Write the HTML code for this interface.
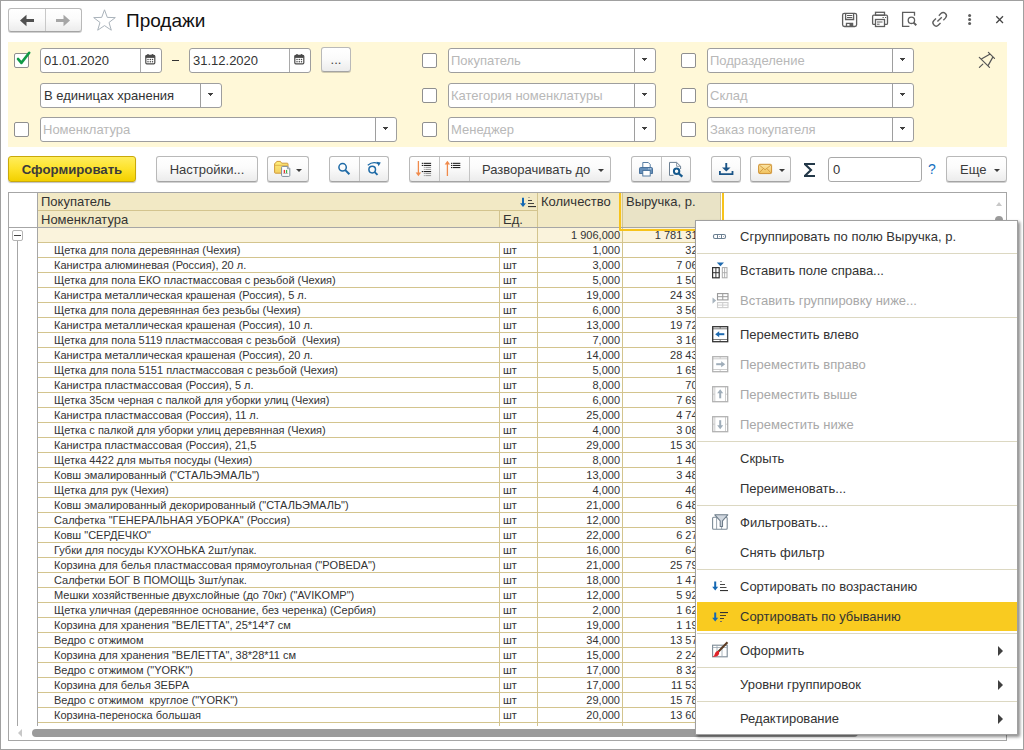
<!DOCTYPE html>
<html><head><meta charset="utf-8"><title>Продажи</title>
<style>
*{box-sizing:border-box;margin:0;padding:0}
html,body{width:1024px;height:750px;overflow:hidden;background:#fff;font-family:"Liberation Sans",sans-serif;color:#333;position:relative}
.a{position:absolute}
.t{position:absolute;white-space:nowrap}
.btn{position:absolute;border:1px solid #b9b9b9;border-bottom-color:#a4a4a4;border-radius:3px;background:linear-gradient(#ffffff 0%,#fbfbfb 45%,#ececec 100%);box-shadow:0 1px 0 rgba(0,0,0,.18)}
.fld{position:absolute;background:#fff;border:1px solid #9e9e9e;border-radius:3px;height:25px}
.dd{position:absolute;top:0;right:0;width:21px;height:23px;border-left:1px solid #9e9e9e}
.dd:after{content:"";position:absolute;left:7px;top:9px;width:5px;height:3px;background:linear-gradient(#404040,#404040) 0 0/5px 1px no-repeat,linear-gradient(#404040,#404040) 1px 1px/3px 1px no-repeat,linear-gradient(#404040,#404040) 2px 2px/1px 1px no-repeat}
.cb{position:absolute;width:15px;height:15px;border:1px solid #8f8f8f;border-radius:2px;background:#fff}
.ph{position:absolute;left:2px;top:0;line-height:23px;font-size:13px;color:#b8b8b8;white-space:nowrap}
.val{position:absolute;left:3px;top:0;line-height:23px;font-size:13px;color:#333;white-space:nowrap}
.arr{position:absolute;border-left:3px solid transparent;border-right:3px solid transparent;border-top:3.5px solid #404040}
.hd{position:absolute;background:#f2eacb}
.cell{position:absolute;font-size:11px;line-height:15px;white-space:pre;color:#333}
.mi{position:absolute;left:0;width:321px;height:30px}
.mt{position:absolute;left:44px;top:0;line-height:30px;font-size:13px;color:#333;white-space:nowrap}
.mt.dis{color:#a8a8a8}
.sep{position:absolute;left:1px;width:320px;height:1px;background:#dcd8c2}
.sub{position:absolute;right:14px;top:10px;border-top:5px solid transparent;border-bottom:5px solid transparent;border-left:5px solid #404040}
</style></head><body>

<div class="a" style="left:0;top:0;width:1024px;height:750px;border:1px solid #a0a0a0"></div>
<div class="btn" style="left:8px;top:8px;width:74px;height:24px"></div>
<div class="a" style="left:45px;top:9px;width:1px;height:22px;background:#c8c8c8"></div>
<svg class="a" style="left:0;top:0" width="1024" height="40">
<path d="M20 20.5 L26.5 14.8 L26.5 26.2 Z" fill="#505050"/><rect x="26" y="19" width="8" height="3" fill="#505050"/>
<path d="M70 20.5 L63.5 14.8 L63.5 26.2 Z" fill="#a6a6a6"/><rect x="56" y="19" width="8" height="3" fill="#a6a6a6"/>
<path d="M104.5 9.8 L107.3 17.4 L115.3 17.6 L109 22.5 L111.3 30.2 L104.5 25.6 L97.7 30.2 L100 22.5 L93.7 17.6 L101.7 17.4 Z" fill="none" stroke="#aab3bb" stroke-width="1"/>
<g fill="none" stroke="#5e5e5e" stroke-width="1.3">
<rect x="842.6" y="13.3" width="14" height="13.2" rx="1.8"/>
<path d="M845.6 13.3 V19.5 H853.6 V13.3"/><path d="M847 15.5 H852.3 M847 17.5 H852.3" stroke-width="1"/>
<path d="M846.5 26.5 V23.4 H852.6 V26.5"/>
</g>
<rect x="849.5" y="23.8" width="3" height="2.7" fill="#5e5e5e"/>
<g fill="none" stroke="#5e5e5e" stroke-width="1.3">
<rect x="875.5" y="12.3" width="9" height="3"/>
<path d="M875.2 24.4 H873.8 Q872.6 24.4 872.6 23.2 V16.4 Q872.6 15.2 873.8 15.2 H886.3 Q887.5 15.2 887.5 16.4 V23.2 Q887.5 24.4 886.3 24.4 H884.8"/>
<rect x="875.5" y="19.5" width="9" height="7"/>
<path d="M877 22 H882.5 M877 24.2 H879.6" stroke-width="1"/>
<path d="M882.5 17.5 H883.8 M885 17.5 H886.2" stroke-width="1"/>
</g>
<g fill="none" stroke="#5e5e5e" stroke-width="1.3">
<path d="M909.4 26.3 H902.6 V12.4 H914.5 V15.8"/>
<circle cx="911.4" cy="20.3" r="3.2"/>
<path d="M913.6 22.6 L916.3 25.2" stroke-width="2"/>
</g>
<g fill="none" stroke="#5e5e5e" stroke-width="1.35" transform="translate(939.6,19.4) rotate(-45)">
<path d="M-1.9 -3.2 H-4.8 A3.2 3.2 0 0 0 -4.8 3.2 H-1.9"/>
<path d="M2.1 -3.2 H5 A3.2 3.2 0 0 1 5 3.2 H2.1"/>
<path d="M-3.1 0 H3.1"/>
</g>
<g fill="#5e5e5e"><circle cx="969.6" cy="15.6" r="1.5"/><circle cx="969.6" cy="19.6" r="1.5"/><circle cx="969.6" cy="23.6" r="1.5"/></g>
<path d="M996.3 16.3 L1003 23 M1003 16.3 L996.3 23" stroke="#454545" stroke-width="1.3"/>
</svg>
<div class="t" style="left:126px;top:9px;font-size:19px;line-height:24px;color:#111">Продажи</div>
<div class="a" style="left:8px;top:42px;width:999px;height:105px;background:#fff8d8"></div>
<div class="cb" style="left:14px;top:53px"></div>
<svg class="a" style="left:10px;top:49px" width="22" height="22"><path d="M8 9.9 L11.4 13.9 L19.2 3.8" fill="none" stroke="#109a46" stroke-width="2.6" stroke-linecap="round" stroke-linejoin="round"/></svg>
<div class="fld" style="left:40px;top:48px;width:122px">
<div class="val">01.01.2020</div>
<div class="a" style="top:0;right:0;width:21px;height:23px;border-left:1px solid #a9a9a9"></div>
<svg class="a" style="right:5px;top:5px" width="11" height="11"><rect x="0.8" y="1.3" width="9" height="8.5" rx="1" fill="#fff" stroke="#4a4a4a" stroke-width="1.2"/><rect x="0.8" y="1.3" width="9" height="2.6" fill="#4a4a4a"/><circle cx="3" cy="1" r="0.9" fill="#4a4a4a"/><circle cx="7.5" cy="1" r="0.9" fill="#4a4a4a"/><g fill="#4a4a4a"><circle cx="3" cy="5.6" r=".75"/><circle cx="5.3" cy="5.6" r=".75"/><circle cx="7.5" cy="5.6" r=".75"/><circle cx="3" cy="7.7" r=".75"/><circle cx="5.3" cy="7.7" r=".75"/><circle cx="7.5" cy="7.7" r=".75"/></g></svg>
</div>
<div class="a" style="left:172px;top:60px;width:7px;height:1px;background:#333"></div>
<div class="fld" style="left:189px;top:48px;width:122px">
<div class="val">31.12.2020</div>
<div class="a" style="top:0;right:0;width:21px;height:23px;border-left:1px solid #a9a9a9"></div>
<svg class="a" style="right:5px;top:5px" width="11" height="11"><rect x="0.8" y="1.3" width="9" height="8.5" rx="1" fill="#fff" stroke="#4a4a4a" stroke-width="1.2"/><rect x="0.8" y="1.3" width="9" height="2.6" fill="#4a4a4a"/><circle cx="3" cy="1" r="0.9" fill="#4a4a4a"/><circle cx="7.5" cy="1" r="0.9" fill="#4a4a4a"/><g fill="#4a4a4a"><circle cx="3" cy="5.6" r=".75"/><circle cx="5.3" cy="5.6" r=".75"/><circle cx="7.5" cy="5.6" r=".75"/><circle cx="3" cy="7.7" r=".75"/><circle cx="5.3" cy="7.7" r=".75"/><circle cx="7.5" cy="7.7" r=".75"/></g></svg>
</div>
<div class="btn" style="left:321px;top:47px;width:30px;height:25px"><div class="t" style="left:0;width:28px;text-align:center;top:0;line-height:24px;font-size:13px;color:#444">...</div></div>
<div class="fld" style="left:40px;top:83px;width:182px">
<div class="val">В единицах хранения</div>
<div class="dd"></div>
</div>
<div class="cb" style="left:14px;top:122px"></div>
<div class="fld" style="left:40px;top:117px;width:357px">
<div class="ph">Номенклатура</div>
<div class="dd"></div>
</div>
<div class="cb" style="left:422px;top:53px"></div>
<div class="fld" style="left:448px;top:48px;width:208px">
<div class="ph">Покупатель</div>
<div class="dd"></div>
</div>
<div class="cb" style="left:422px;top:88px"></div>
<div class="fld" style="left:448px;top:83px;width:208px">
<div class="ph">Категория номенклатуры</div>
<div class="dd"></div>
</div>
<div class="cb" style="left:422px;top:122px"></div>
<div class="fld" style="left:448px;top:117px;width:208px">
<div class="ph">Менеджер</div>
<div class="dd"></div>
</div>
<div class="cb" style="left:681px;top:53px"></div>
<div class="fld" style="left:707px;top:48px;width:207px">
<div class="ph">Подразделение</div>
<div class="dd"></div>
</div>
<div class="cb" style="left:681px;top:88px"></div>
<div class="fld" style="left:707px;top:83px;width:207px">
<div class="ph">Склад</div>
<div class="dd"></div>
</div>
<div class="cb" style="left:681px;top:122px"></div>
<div class="fld" style="left:707px;top:117px;width:207px">
<div class="ph">Заказ покупателя</div>
<div class="dd"></div>
</div>
<svg class="a" style="left:970px;top:44px" width="30" height="30"><g fill="none" stroke="#555" stroke-width="1.2" stroke-linecap="round" transform="translate(-970,-44)"><path d="M979.3 57.4 L989.5 67.4 M988.4 52.3 L994.5 58.4 M981.8 58.8 L989.3 54.4 M992.7 57.4 L988.2 65.4 M979.4 67.4 L982.8 64.1"/></g></svg>
<div class="a" style="left:8px;top:156px;width:128px;height:26px;border:1px solid #c9a90a;border-radius:3px;background:linear-gradient(#ffed5c 0%,#fde22a 50%,#f2d000 100%);box-shadow:0 1px 1px rgba(0,0,0,.25)"></div>
<div class="t" style="left:8px;top:156px;width:128px;text-align:center;line-height:27px;font-size:13.2px;font-weight:bold;color:#3b3b3b">Сформировать</div>
<div class="btn" style="left:156px;top:156px;width:102px;height:26px"></div>
<div class="t" style="left:156px;top:156px;width:102px;text-align:center;line-height:27px;font-size:13px;color:#3b3b3b">Настройки...</div>
<div class="btn" style="left:267px;top:156px;width:42px;height:26px"></div>
<svg class="a" style="left:296px;top:169px" width="6" height="3"><path d="M0 0H6L3 3Z" fill="#3c3c3c"/></svg>
<div class="btn" style="left:329px;top:156px;width:60px;height:26px"></div>
<div class="a" style="left:359px;top:157px;width:1px;height:24px;background:#c4c4c4"></div>
<div class="btn" style="left:409px;top:156px;width:202px;height:26px"></div>
<div class="a" style="left:439px;top:157px;width:1px;height:24px;background:#c4c4c4"></div>
<div class="a" style="left:469px;top:157px;width:1px;height:24px;background:#c4c4c4"></div>
<div class="t" style="left:482px;top:156px;line-height:27px;font-size:13px;color:#3b3b3b">Разворачивать до</div>
<svg class="a" style="left:598px;top:169px" width="6" height="3"><path d="M0 0H6L3 3Z" fill="#3c3c3c"/></svg>
<div class="btn" style="left:631px;top:156px;width:60px;height:26px"></div>
<div class="a" style="left:661px;top:157px;width:1px;height:24px;background:#c4c4c4"></div>
<div class="btn" style="left:711px;top:156px;width:30px;height:26px"></div>
<div class="btn" style="left:750px;top:156px;width:41px;height:26px"></div>
<svg class="a" style="left:779px;top:169px" width="6" height="3"><path d="M0 0H6L3 3Z" fill="#3c3c3c"/></svg>
<div class="fld" style="left:828px;top:157px;width:94px;height:25px;border-color:#a9a9a9"><div class="val" style="left:4px">0</div></div>
<div class="t" style="left:928px;top:156px;line-height:27px;font-size:14px;color:#1670c0">?</div>
<div class="btn" style="left:946px;top:156px;width:61px;height:26px"></div>
<div class="t" style="left:960px;top:156px;line-height:27px;font-size:13px;color:#3b3b3b">Еще</div>
<svg class="a" style="left:994px;top:169px" width="6" height="3"><path d="M0 0H6L3 3Z" fill="#3c3c3c"/></svg>
<svg class="a" style="left:0;top:150px" width="1024" height="40"><g transform="translate(0,-150)">
<defs><linearGradient id="fg" x1="0" y1="0" x2="0" y2="1"><stop offset="0" stop-color="#fff07a"/><stop offset="1" stop-color="#f3cf62"/></linearGradient><linearGradient id="eg" x1="0" y1="0" x2="0" y2="1"><stop offset="0" stop-color="#fbe6a8"/><stop offset="1" stop-color="#f0c05a"/></linearGradient></defs>
<path d="M274.6 164 Q274.6 163.2 275.4 163.2 L276.8 161.4 H280.4 L281.6 163.2 H287.2 Q288 163.2 288 164 V172.4 Q288 173.2 287.2 173.2 H275.4 Q274.6 173.2 274.6 172.4 Z" fill="url(#fg)" stroke="#d09a3a" stroke-width="1"/>
<path d="M275 165.3 H287.6" stroke="#d9a745" stroke-width="0.8"/>
<path d="M282.6 166.4 H287.6 L289.8 168.6 V175.4 Q289.8 176.4 288.8 176.4 H282.6 Q281.6 176.4 281.6 175.4 V167.4 Q281.6 166.4 282.6 166.4 Z" fill="#fff" stroke="#7b8b99" stroke-width="1"/>
<path d="M287.4 166.6 V168.8 H289.6" fill="#c8d0d8" stroke="#7b8b99" stroke-width="0.7"/>
<rect x="283.7" y="169.9" width="1.3" height="3.3" fill="#e53535"/><rect x="285.9" y="169.9" width="1.3" height="3.3" fill="#3cb44b"/><path d="M283.2 173.6 H288.2" stroke="#8a8f99" stroke-width="0.6"/>
<g fill="none" stroke="#1e6aa6" stroke-width="1.5"><circle cx="342.6" cy="167.3" r="3.7"/><path d="M345.3 170.1 L349.4 174.3" stroke-width="2"/></g>
<g fill="none" stroke="#1e6aa6" stroke-width="1.5"><circle cx="372.2" cy="169.6" r="3.3"/><path d="M374.7 172.1 L377.5 174.9" stroke-width="1.9"/><path d="M367.8 165.2 Q373 160.8 378.6 163.8" stroke-width="1.3"/></g>
<path d="M376.6 161.8 L380.8 162.6 L378.6 166.3 Z" fill="#1e6aa6"/>
<g stroke="#f08a4b" fill="#f08a4b"><path d="M418.4 161 V174" stroke-width="1.3"/><path d="M415.7 172.5 H421.1 L418.4 176.2 Z" stroke="none"/></g>
<g fill="#222"><rect x="421.8" y="162.8" width="1.2" height="1.1"/><rect x="423.6" y="162.8" width="7.5" height="1.1"/><rect x="421.8" y="164.9" width="1.2" height="1.1"/><rect x="423.6" y="164.9" width="7.5" height="1.1"/><rect x="421.8" y="171" width="1.2" height="1.1"/><rect x="423.6" y="171" width="7.5" height="1.1"/></g>
<g fill="#999"><rect x="423.8" y="166.9" width="1" height="1"/><rect x="425.4" y="166.9" width="5.7" height="1"/><rect x="423.8" y="168.9" width="1" height="1"/><rect x="425.4" y="168.9" width="5.7" height="1"/><rect x="423.8" y="173" width="1" height="1"/><rect x="425.4" y="173" width="5.7" height="1"/><rect x="423.8" y="175.1" width="1" height="1"/><rect x="425.4" y="175.1" width="5.7" height="1"/></g>
<g stroke="#f08a4b" fill="#f08a4b"><path d="M447.4 176 V163" stroke-width="1.3"/><path d="M444.7 164.5 H450.1 L447.4 160.8 Z" stroke="none"/></g>
<g fill="#222"><rect x="451" y="162.8" width="1.2" height="1.1"/><rect x="452.8" y="162.8" width="7.5" height="1.1"/><rect x="451" y="164.9" width="1.2" height="1.1"/><rect x="452.8" y="164.9" width="7.5" height="1.1"/><rect x="451" y="167" width="1.2" height="1.1"/><rect x="452.8" y="167" width="7.5" height="1.1"/></g>
<path d="M642.8 167.5 V162.5 H648.3 L650.2 164.4 V167.5" fill="#fff" stroke="#46709a" stroke-width="0.9"/>
<path d="M640.6 167.5 H651.4 Q652.5 167.5 652.5 168.6 V173.5 H639.5 V168.6 Q639.5 167.5 640.6 167.5 Z" fill="#6790ba" stroke="#3f6a95" stroke-width="0.9"/>
<rect x="642.8" y="170.5" width="7.4" height="5.5" fill="#fff" stroke="#46709a" stroke-width="0.9"/>
<rect x="648.4" y="168.4" width="1" height="0.9" fill="#fff"/><rect x="650.2" y="168.4" width="1" height="0.9" fill="#fff"/>
<path d="M669.5 175.4 V162.4 H676.6 L680.6 166.3 V169" fill="#fff" stroke="#6c7f92" stroke-width="1"/>
<path d="M676.6 162.4 V166.3 H680.6" fill="none" stroke="#6c7f92" stroke-width="0.8"/>
<path d="M669.5 175.4 H673.5" stroke="#6c7f92" stroke-width="1"/>
<g fill="none" stroke="#175a8e" stroke-width="2"><circle cx="676.6" cy="171.3" r="2.7"/><path d="M678.8 173.5 L682.3 176.6" stroke-width="2.3"/></g>
<g fill="#1a5487"><rect x="725.3" y="163" width="1.9" height="5.5"/><path d="M722 167.6 H730.5 L726.25 171.6 Z"/><path d="M719 171 H720.8 V173.3 H731.6 V171 H733.4 V175 H719 Z"/></g>
<path d="M758.6 165.5 Q758.6 164.3 759.8 164.3 H770.4 Q771.6 164.3 771.6 165.5 V172.4 Q771.6 173.6 770.4 173.6 H759.8 Q758.6 173.6 758.6 172.4 Z" fill="url(#eg)" stroke="#cf9234" stroke-width="1"/>
<path d="M759.2 165 L765.1 169.8 L771 165 M759.2 173 L763.3 168.6 M771 173 L766.9 168.6" fill="none" stroke="#d39a40" stroke-width="0.9"/>
<rect x="804" y="163" width="11" height="2" fill="#233848"/><rect x="804" y="175" width="11" height="2" fill="#233848"/><path d="M805 164.3 L811 170 L805 175.7" fill="none" stroke="#233848" stroke-width="2.1"/>
</g></svg>
<div class="a" style="left:8px;top:192px;width:999px;height:549px;border:1px solid #a6a6a6;background:#fff;overflow:hidden"><div class="a" style="left:0;top:0;width:997px;height:533px;overflow:hidden">
<div class="a" style="left:29px;top:0px;width:584px;height:34px;background:#f2e9c5"></div>
<div class="a" style="left:613px;top:0px;width:99px;height:34px;background:#e9e3c6"></div>
<div class="a" style="left:29px;top:35px;width:685px;height:14px;background:#faf3dc"></div>
<div class="a" style="left:28px;top:0px;width:1px;height:533px;background:#a6a6a6"></div>
<div class="a" style="left:29px;top:17px;width:499px;height:1px;background:#d3c48e"></div>
<div class="a" style="left:490px;top:18px;width:1px;height:16px;background:#d3c48e"></div>
<div class="a" style="left:528px;top:0px;width:1px;height:533px;background:#d3c48e"></div>
<div class="a" style="left:613px;top:0px;width:1px;height:533px;background:#d3c48e"></div>
<div class="a" style="left:711px;top:0px;width:1px;height:34px;background:#d3c48e"></div>
<div class="a" style="left:712px;top:0px;width:3px;height:35px;background:#fff"></div>
<div class="a" style="left:0px;top:34px;width:714px;height:1px;background:#a6a6a6"></div>
<div class="a" style="left:490px;top:50px;width:1px;height:483px;background:#d3c48e"></div>
<div class="a" style="left:714px;top:35px;width:1px;height:498px;background:#d3c48e"></div>
<div class="a" style="left:29px;top:49px;width:686px;height:1px;background:#d3c48e"></div>
<div class="a" style="left:29px;top:64px;width:686px;height:1px;background:#d3c48e"></div>
<div class="a" style="left:29px;top:79px;width:686px;height:1px;background:#d3c48e"></div>
<div class="a" style="left:29px;top:94px;width:686px;height:1px;background:#d3c48e"></div>
<div class="a" style="left:29px;top:109px;width:686px;height:1px;background:#d3c48e"></div>
<div class="a" style="left:29px;top:124px;width:686px;height:1px;background:#d3c48e"></div>
<div class="a" style="left:29px;top:139px;width:686px;height:1px;background:#d3c48e"></div>
<div class="a" style="left:29px;top:154px;width:686px;height:1px;background:#d3c48e"></div>
<div class="a" style="left:29px;top:169px;width:686px;height:1px;background:#d3c48e"></div>
<div class="a" style="left:29px;top:184px;width:686px;height:1px;background:#d3c48e"></div>
<div class="a" style="left:29px;top:199px;width:686px;height:1px;background:#d3c48e"></div>
<div class="a" style="left:29px;top:214px;width:686px;height:1px;background:#d3c48e"></div>
<div class="a" style="left:29px;top:229px;width:686px;height:1px;background:#d3c48e"></div>
<div class="a" style="left:29px;top:244px;width:686px;height:1px;background:#d3c48e"></div>
<div class="a" style="left:29px;top:259px;width:686px;height:1px;background:#d3c48e"></div>
<div class="a" style="left:29px;top:274px;width:686px;height:1px;background:#d3c48e"></div>
<div class="a" style="left:29px;top:289px;width:686px;height:1px;background:#d3c48e"></div>
<div class="a" style="left:29px;top:304px;width:686px;height:1px;background:#d3c48e"></div>
<div class="a" style="left:29px;top:319px;width:686px;height:1px;background:#d3c48e"></div>
<div class="a" style="left:29px;top:334px;width:686px;height:1px;background:#d3c48e"></div>
<div class="a" style="left:29px;top:349px;width:686px;height:1px;background:#d3c48e"></div>
<div class="a" style="left:29px;top:364px;width:686px;height:1px;background:#d3c48e"></div>
<div class="a" style="left:29px;top:379px;width:686px;height:1px;background:#d3c48e"></div>
<div class="a" style="left:29px;top:394px;width:686px;height:1px;background:#d3c48e"></div>
<div class="a" style="left:29px;top:409px;width:686px;height:1px;background:#d3c48e"></div>
<div class="a" style="left:29px;top:424px;width:686px;height:1px;background:#d3c48e"></div>
<div class="a" style="left:29px;top:439px;width:686px;height:1px;background:#d3c48e"></div>
<div class="a" style="left:29px;top:454px;width:686px;height:1px;background:#d3c48e"></div>
<div class="a" style="left:29px;top:469px;width:686px;height:1px;background:#d3c48e"></div>
<div class="a" style="left:29px;top:484px;width:686px;height:1px;background:#d3c48e"></div>
<div class="a" style="left:29px;top:499px;width:686px;height:1px;background:#d3c48e"></div>
<div class="a" style="left:29px;top:514px;width:686px;height:1px;background:#d3c48e"></div>
<div class="a" style="left:29px;top:529px;width:686px;height:1px;background:#d3c48e"></div>
<div class="a" style="left:29px;top:544px;width:686px;height:1px;background:#d3c48e"></div>
<div class="t" style="left:32px;top:1px;font-size:13px;line-height:15px;color:#333;">Покупатель</div>
<div class="t" style="left:32px;top:19px;font-size:13px;line-height:15px;color:#333;">Номенклатура</div>
<div class="t" style="left:494px;top:19px;font-size:13px;line-height:15px;color:#333;">Ед.</div>
<div class="t" style="left:532px;top:1px;font-size:13px;line-height:15px;color:#333;">Количество</div>
<div class="t" style="left:617px;top:1px;font-size:13px;line-height:15px;color:#333;">Выручка, р.</div>
<svg class="a" style="left:508px;top:2px" width="30" height="16"><g transform="translate(-517,-195)"><path d="M523 197.8 V204" stroke="#1568b3" stroke-width="2"/><path d="M520 203.3 H526 L523 206.9 Z" fill="#1568b3"/><g fill="#333"><rect x="528" y="197" width="2" height="0.8" fill="#999"/><rect x="528" y="200" width="4" height="0.9"/><rect x="528" y="203" width="6" height="0.9"/><rect x="528" y="206" width="8" height="1.1"/></g></g></svg>
<div class="cell" style="left:411px;top:35px;width:200px;text-align:right;color:#333">1 906,000</div>
<div class="cell" style="left:510px;top:35px;width:200px;text-align:right;color:#333">1 781 315,00</div>
<div class="a" style="left:3px;top:37px;width:11px;height:11px;border:1px solid #b5b5b5;border-radius:2px;background:#fff"></div>
<div class="a" style="left:5px;top:42px;width:7px;height:1px;background:#444"></div>
<div class="a" style="left:8px;top:48px;width:1px;height:485px;background:#a6a6a6"></div>
<div class="cell" style="left:45px;top:50px;color:#333">Щетка для пола деревянная (Чехия)</div>
<div class="cell" style="left:494px;top:50px;color:#333">шт</div>
<div class="cell" style="left:411px;top:50px;width:200px;text-align:right;color:#333">1,000</div>
<div class="cell" style="left:510px;top:50px;width:200px;text-align:right;color:#333">325,00</div>
<div class="cell" style="left:45px;top:65px;color:#333">Канистра алюминевая (Россия), 20 л.</div>
<div class="cell" style="left:494px;top:65px;color:#333">шт</div>
<div class="cell" style="left:411px;top:65px;width:200px;text-align:right;color:#333">3,000</div>
<div class="cell" style="left:510px;top:65px;width:200px;text-align:right;color:#333">7 065,00</div>
<div class="cell" style="left:45px;top:80px;color:#333">Щетка для пола ЕКО пластмассовая с резьбой (Чехия)</div>
<div class="cell" style="left:494px;top:80px;color:#333">шт</div>
<div class="cell" style="left:411px;top:80px;width:200px;text-align:right;color:#333">5,000</div>
<div class="cell" style="left:510px;top:80px;width:200px;text-align:right;color:#333">1 505,00</div>
<div class="cell" style="left:45px;top:95px;color:#333">Канистра металлическая крашеная (Россия), 5 л.</div>
<div class="cell" style="left:494px;top:95px;color:#333">шт</div>
<div class="cell" style="left:411px;top:95px;width:200px;text-align:right;color:#333">19,000</div>
<div class="cell" style="left:510px;top:95px;width:200px;text-align:right;color:#333">24 395,00</div>
<div class="cell" style="left:45px;top:110px;color:#333">Щетка для пола деревянная без резьбы (Чехия)</div>
<div class="cell" style="left:494px;top:110px;color:#333">шт</div>
<div class="cell" style="left:411px;top:110px;width:200px;text-align:right;color:#333">6,000</div>
<div class="cell" style="left:510px;top:110px;width:200px;text-align:right;color:#333">3 565,00</div>
<div class="cell" style="left:45px;top:125px;color:#333">Канистра металлическая крашеная (Россия), 10 л.</div>
<div class="cell" style="left:494px;top:125px;color:#333">шт</div>
<div class="cell" style="left:411px;top:125px;width:200px;text-align:right;color:#333">13,000</div>
<div class="cell" style="left:510px;top:125px;width:200px;text-align:right;color:#333">19 725,00</div>
<div class="cell" style="left:45px;top:140px;color:#333">Щетка для пола 5119 пластмассовая с резьбой  (Чехия)</div>
<div class="cell" style="left:494px;top:140px;color:#333">шт</div>
<div class="cell" style="left:411px;top:140px;width:200px;text-align:right;color:#333">7,000</div>
<div class="cell" style="left:510px;top:140px;width:200px;text-align:right;color:#333">3 165,00</div>
<div class="cell" style="left:45px;top:155px;color:#333">Канистра металлическая крашеная (Россия), 20 л.</div>
<div class="cell" style="left:494px;top:155px;color:#333">шт</div>
<div class="cell" style="left:411px;top:155px;width:200px;text-align:right;color:#333">14,000</div>
<div class="cell" style="left:510px;top:155px;width:200px;text-align:right;color:#333">28 435,00</div>
<div class="cell" style="left:45px;top:170px;color:#333">Щетка для пола 5151 пластмассовая с резьбой (Чехия)</div>
<div class="cell" style="left:494px;top:170px;color:#333">шт</div>
<div class="cell" style="left:411px;top:170px;width:200px;text-align:right;color:#333">5,000</div>
<div class="cell" style="left:510px;top:170px;width:200px;text-align:right;color:#333">1 655,00</div>
<div class="cell" style="left:45px;top:185px;color:#333">Канистра пластмассовая (Россия), 5 л.</div>
<div class="cell" style="left:494px;top:185px;color:#333">шт</div>
<div class="cell" style="left:411px;top:185px;width:200px;text-align:right;color:#333">8,000</div>
<div class="cell" style="left:510px;top:185px;width:200px;text-align:right;color:#333">705,00</div>
<div class="cell" style="left:45px;top:200px;color:#333">Щетка 35см черная с палкой для уборки улиц (Чехия)</div>
<div class="cell" style="left:494px;top:200px;color:#333">шт</div>
<div class="cell" style="left:411px;top:200px;width:200px;text-align:right;color:#333">6,000</div>
<div class="cell" style="left:510px;top:200px;width:200px;text-align:right;color:#333">7 695,00</div>
<div class="cell" style="left:45px;top:215px;color:#333">Канистра пластмассовая (Россия), 11 л.</div>
<div class="cell" style="left:494px;top:215px;color:#333">шт</div>
<div class="cell" style="left:411px;top:215px;width:200px;text-align:right;color:#333">25,000</div>
<div class="cell" style="left:510px;top:215px;width:200px;text-align:right;color:#333">4 745,00</div>
<div class="cell" style="left:45px;top:230px;color:#333">Щетка с палкой для уборки улиц деревянная (Чехия)</div>
<div class="cell" style="left:494px;top:230px;color:#333">шт</div>
<div class="cell" style="left:411px;top:230px;width:200px;text-align:right;color:#333">4,000</div>
<div class="cell" style="left:510px;top:230px;width:200px;text-align:right;color:#333">3 085,00</div>
<div class="cell" style="left:45px;top:245px;color:#333">Канистра пластмассовая (Россия), 21,5</div>
<div class="cell" style="left:494px;top:245px;color:#333">шт</div>
<div class="cell" style="left:411px;top:245px;width:200px;text-align:right;color:#333">29,000</div>
<div class="cell" style="left:510px;top:245px;width:200px;text-align:right;color:#333">15 305,00</div>
<div class="cell" style="left:45px;top:260px;color:#333">Щетка 4422 для мытья посуды (Чехия)</div>
<div class="cell" style="left:494px;top:260px;color:#333">шт</div>
<div class="cell" style="left:411px;top:260px;width:200px;text-align:right;color:#333">8,000</div>
<div class="cell" style="left:510px;top:260px;width:200px;text-align:right;color:#333">1 465,00</div>
<div class="cell" style="left:45px;top:275px;color:#333">Ковш эмалированный (&quot;СТАЛЬЭМАЛЬ&quot;)</div>
<div class="cell" style="left:494px;top:275px;color:#333">шт</div>
<div class="cell" style="left:411px;top:275px;width:200px;text-align:right;color:#333">13,000</div>
<div class="cell" style="left:510px;top:275px;width:200px;text-align:right;color:#333">3 485,00</div>
<div class="cell" style="left:45px;top:290px;color:#333">Щетка для рук (Чехия)</div>
<div class="cell" style="left:494px;top:290px;color:#333">шт</div>
<div class="cell" style="left:411px;top:290px;width:200px;text-align:right;color:#333">4,000</div>
<div class="cell" style="left:510px;top:290px;width:200px;text-align:right;color:#333">465,00</div>
<div class="cell" style="left:45px;top:305px;color:#333">Ковш эмалированный декорированный (&quot;СТАЛЬЭМАЛЬ&quot;)</div>
<div class="cell" style="left:494px;top:305px;color:#333">шт</div>
<div class="cell" style="left:411px;top:305px;width:200px;text-align:right;color:#333">21,000</div>
<div class="cell" style="left:510px;top:305px;width:200px;text-align:right;color:#333">6 485,00</div>
<div class="cell" style="left:45px;top:320px;color:#333">Салфетка &quot;ГЕНЕРАЛЬНАЯ УБОРКА&quot; (Россия)</div>
<div class="cell" style="left:494px;top:320px;color:#333">шт</div>
<div class="cell" style="left:411px;top:320px;width:200px;text-align:right;color:#333">12,000</div>
<div class="cell" style="left:510px;top:320px;width:200px;text-align:right;color:#333">895,00</div>
<div class="cell" style="left:45px;top:335px;color:#333">Ковш &quot;СЕРДЕЧКО&quot;</div>
<div class="cell" style="left:494px;top:335px;color:#333">шт</div>
<div class="cell" style="left:411px;top:335px;width:200px;text-align:right;color:#333">22,000</div>
<div class="cell" style="left:510px;top:335px;width:200px;text-align:right;color:#333">6 275,00</div>
<div class="cell" style="left:45px;top:350px;color:#333">Губки для посуды КУХОНЬКА 2шт/упак.</div>
<div class="cell" style="left:494px;top:350px;color:#333">шт</div>
<div class="cell" style="left:411px;top:350px;width:200px;text-align:right;color:#333">16,000</div>
<div class="cell" style="left:510px;top:350px;width:200px;text-align:right;color:#333">645,00</div>
<div class="cell" style="left:45px;top:365px;color:#333">Корзина для белья пластмассовая прямоугольная (&quot;POBEDA&quot;)</div>
<div class="cell" style="left:494px;top:365px;color:#333">шт</div>
<div class="cell" style="left:411px;top:365px;width:200px;text-align:right;color:#333">21,000</div>
<div class="cell" style="left:510px;top:365px;width:200px;text-align:right;color:#333">25 795,00</div>
<div class="cell" style="left:45px;top:380px;color:#333">Салфетки БОГ В ПОМОЩЬ 3шт/упак.</div>
<div class="cell" style="left:494px;top:380px;color:#333">шт</div>
<div class="cell" style="left:411px;top:380px;width:200px;text-align:right;color:#333">18,000</div>
<div class="cell" style="left:510px;top:380px;width:200px;text-align:right;color:#333">1 475,00</div>
<div class="cell" style="left:45px;top:395px;color:#333">Мешки хозяйственные двухслойные (до 70кг) (&quot;AVIKOMP&quot;)</div>
<div class="cell" style="left:494px;top:395px;color:#333">шт</div>
<div class="cell" style="left:411px;top:395px;width:200px;text-align:right;color:#333">12,000</div>
<div class="cell" style="left:510px;top:395px;width:200px;text-align:right;color:#333">5 925,00</div>
<div class="cell" style="left:45px;top:410px;color:#333">Щетка уличная (деревянное основание, без черенка) (Сербия)</div>
<div class="cell" style="left:494px;top:410px;color:#333">шт</div>
<div class="cell" style="left:411px;top:410px;width:200px;text-align:right;color:#333">2,000</div>
<div class="cell" style="left:510px;top:410px;width:200px;text-align:right;color:#333">1 625,00</div>
<div class="cell" style="left:45px;top:425px;color:#333">Корзина для хранения &quot;ВЕЛЕТТА&quot;, 25*14*7 см</div>
<div class="cell" style="left:494px;top:425px;color:#333">шт</div>
<div class="cell" style="left:411px;top:425px;width:200px;text-align:right;color:#333">19,000</div>
<div class="cell" style="left:510px;top:425px;width:200px;text-align:right;color:#333">1 195,00</div>
<div class="cell" style="left:45px;top:440px;color:#333">Ведро с отжимом</div>
<div class="cell" style="left:494px;top:440px;color:#333">шт</div>
<div class="cell" style="left:411px;top:440px;width:200px;text-align:right;color:#333">34,000</div>
<div class="cell" style="left:510px;top:440px;width:200px;text-align:right;color:#333">13 575,00</div>
<div class="cell" style="left:45px;top:455px;color:#333">Корзина для хранения &quot;ВЕЛЕТТА&quot;, 38*28*11 см</div>
<div class="cell" style="left:494px;top:455px;color:#333">шт</div>
<div class="cell" style="left:411px;top:455px;width:200px;text-align:right;color:#333">15,000</div>
<div class="cell" style="left:510px;top:455px;width:200px;text-align:right;color:#333">2 245,00</div>
<div class="cell" style="left:45px;top:470px;color:#333">Ведро с отжимом (&quot;YORK&quot;)</div>
<div class="cell" style="left:494px;top:470px;color:#333">шт</div>
<div class="cell" style="left:411px;top:470px;width:200px;text-align:right;color:#333">17,000</div>
<div class="cell" style="left:510px;top:470px;width:200px;text-align:right;color:#333">8 325,00</div>
<div class="cell" style="left:45px;top:485px;color:#333">Корзина для белья ЗЕБРА</div>
<div class="cell" style="left:494px;top:485px;color:#333">шт</div>
<div class="cell" style="left:411px;top:485px;width:200px;text-align:right;color:#333">17,000</div>
<div class="cell" style="left:510px;top:485px;width:200px;text-align:right;color:#333">11 535,00</div>
<div class="cell" style="left:45px;top:500px;color:#333">Ведро с отжимом  круглое (&quot;YORK&quot;)</div>
<div class="cell" style="left:494px;top:500px;color:#333">шт</div>
<div class="cell" style="left:411px;top:500px;width:200px;text-align:right;color:#333">29,000</div>
<div class="cell" style="left:510px;top:500px;width:200px;text-align:right;color:#333">15 785,00</div>
<div class="cell" style="left:45px;top:515px;color:#333">Корзина-переноска большая</div>
<div class="cell" style="left:494px;top:515px;color:#333">шт</div>
<div class="cell" style="left:411px;top:515px;width:200px;text-align:right;color:#333">20,000</div>
<div class="cell" style="left:510px;top:515px;width:200px;text-align:right;color:#333">13 605,00</div>
<div class="cell" style="left:45px;top:530px;color:#333">Таз оцинкованный 10 л.</div>
<div class="cell" style="left:494px;top:530px;color:#333">шт</div>
<div class="cell" style="left:411px;top:530px;width:200px;text-align:right;color:#333">10,000</div>
<div class="cell" style="left:510px;top:530px;width:200px;text-align:right;color:#333">9 105,00</div>
<div class="a" style="left:610px;top:0px;width:105px;height:38px;border:2px solid #f7c31b;border-top:none"></div>
</div></div>
<div class="a" style="left:32px;top:729px;width:826px;height:8px;border-radius:4px;background:#9b9b9b"></div>
<div class="a" style="left:18px;top:729px;width:0;height:0;border-top:4px solid transparent;border-bottom:4px solid transparent;border-right:4px solid #c8c8c8"></div>
<div class="a" style="left:996px;top:202px;width:0;height:0;border-left:3px solid transparent;border-right:3px solid transparent;border-bottom:4px solid #c8c8c8"></div>
<div class="a" style="left:995px;top:216px;width:8px;height:30px;border-radius:4px;background:#9b9b9b"></div>
<div class="a" style="left:695px;top:220px;width:323px;height:515px;border:1px solid #a0a0a0;background:#fff;box-shadow:2px 2px 3px rgba(0,0,0,.45)">
<div class="mt" style="top:1px">Сгруппировать по полю Выручка, р.</div>
<svg class="a" style="left:17px;top:9px;overflow:visible" width="18" height="20"><g transform="translate(0,3)"><rect x="0.5" y="1.5" width="12" height="4" rx="1.5" fill="#fff" stroke="#6b7f91" stroke-width="1.1"/><path d="M4.5 1.5 V5.5 M8.5 1.5 V5.5" stroke="#6b7f91" stroke-width="1"/><circle cx="6.5" cy="3.5" r=".5" fill="#99a"/><circle cx="10.5" cy="3.5" r=".5" fill="#99a"/></g></svg>
<div class="sep" style="top:32px"></div>
<div class="mt" style="top:35px">Вставить поле справа...</div>
<svg class="a" style="left:16px;top:40.5px;overflow:visible" width="18" height="20"><g transform="translate(0,3)"><path d="M4.8 -2.5 H12 L8.4 1.3 Z" fill="#1e6ab0"/><rect x="0.6" y="2.6" width="6.6" height="10.2" fill="none" stroke="#333" stroke-width="1.2"/><path d="M3.9 2.6 V12.8 M0.6 7.7 H7.2" stroke="#333" stroke-width="1"/><rect x="10.3" y="2.6" width="4.7" height="10.2" fill="none" stroke="#aaa" stroke-width="1"/><path d="M12.6 2.6 V12.8 M10.3 7.7 H15" stroke="#aaa" stroke-width="0.9"/></g></svg>
<div class="mt dis" style="top:65px">Вставить группировку ниже...</div>
<svg class="a" style="left:16px;top:68.5px;overflow:visible" width="18" height="20"><g transform="translate(0,3)"><path d="M0.5 4.5 L4.2 7.6 L0.5 10.8 Z" fill="#a9b5bf"/><rect x="5.5" y="0.6" width="10.5" height="6.3" fill="none" stroke="#9a9a9a" stroke-width="1.1"/><path d="M10.75 0.6 V6.9 M5.5 3.7 H16" stroke="#9a9a9a" stroke-width="1"/><rect x="5.5" y="9.6" width="10.5" height="5" fill="none" stroke="#cdcdcd" stroke-width="1.1"/><path d="M10.75 9.6 V14.6 M5.5 12.1 H16" stroke="#cdcdcd" stroke-width="1"/></g></svg>
<div class="sep" style="top:96px"></div>
<div class="mt" style="top:99px">Переместить влево</div>
<svg class="a" style="left:16px;top:101.5px;overflow:visible" width="18" height="20"><g transform="translate(0,3)"><rect x="0.7" y="0.7" width="15" height="15" fill="#fff" stroke="#333" stroke-width="1.3"/><path d="M0.7 2.8 H15.7 M0.7 13.5 H15.7 M8.2 0.7 V2.8 M8.2 13.5 V15.7" stroke="#333" stroke-width="0.9" opacity=".7"/><path d="M6.5 8.2 H12.3" stroke="#1e6ab0" stroke-width="2"/><path d="M3.2 8.2 L7.2 5.2 V11.2 Z" fill="#1e6ab0"/></g></svg>
<div class="mt dis" style="top:129px">Переместить вправо</div>
<svg class="a" style="left:16px;top:131.5px;overflow:visible" width="18" height="20"><g transform="translate(0,3)"><rect x="0.7" y="0.7" width="15" height="15" fill="#fff" stroke="#b2b2b2" stroke-width="1.3"/><path d="M0.7 2.8 H15.7 M0.7 13.5 H15.7 M8.2 0.7 V2.8 M8.2 13.5 V15.7" stroke="#b2b2b2" stroke-width="0.9" opacity=".7"/><path d="M4.2 8.2 H10" stroke="#9fadb9" stroke-width="2"/><path d="M13.2 8.2 L9.2 5.2 V11.2 Z" fill="#9fadb9"/></g></svg>
<div class="mt dis" style="top:159px">Переместить выше</div>
<svg class="a" style="left:16px;top:161.5px;overflow:visible" width="18" height="20"><g transform="translate(0,3)"><rect x="0.7" y="0.7" width="15" height="15" fill="#fff" stroke="#b2b2b2" stroke-width="1.3"/><path d="M2.8 0.7 V15.7 M13.5 0.7 V15.7 M0.7 8.2 H2.8 M13.5 8.2 H15.7" stroke="#b2b2b2" stroke-width="0.9" opacity=".7"/><path d="M8.2 6.5 V12.3" stroke="#9fadb9" stroke-width="2"/><path d="M8.2 3.2 L5.2 7.2 H11.2 Z" fill="#9fadb9"/></g></svg>
<div class="mt dis" style="top:189px">Переместить ниже</div>
<svg class="a" style="left:16px;top:191.5px;overflow:visible" width="18" height="20"><g transform="translate(0,3)"><rect x="0.7" y="0.7" width="15" height="15" fill="#fff" stroke="#b2b2b2" stroke-width="1.3"/><path d="M2.8 0.7 V15.7 M13.5 0.7 V15.7 M0.7 8.2 H2.8 M13.5 8.2 H15.7" stroke="#b2b2b2" stroke-width="0.9" opacity=".7"/><path d="M8.2 4.2 V10" stroke="#9fadb9" stroke-width="2"/><path d="M8.2 13.2 L5.2 9.2 H11.2 Z" fill="#9fadb9"/></g></svg>
<div class="sep" style="top:220px"></div>
<div class="mt" style="top:223px">Скрыть</div>
<div class="mt" style="top:253px">Переименовать...</div>
<div class="sep" style="top:284px"></div>
<div class="mt" style="top:287px">Фильтровать...</div>
<svg class="a" style="left:16px;top:290px;overflow:visible" width="18" height="20"><g transform="translate(0,3)"><rect x="0.6" y="3.2" width="14.6" height="12" rx="1" fill="#fff" stroke="#7c8a96" stroke-width="1.1"/><path d="M4.6 3.2 V15.2 M9.6 8 V15.2" stroke="#8c99a4" stroke-width="0.9"/><path d="M2.8 0.8 H15.8 L10.5 6.8 V12.5 H8.2 V6.8 Z" fill="#cfd6de" stroke="#6f7e8b" stroke-width="1.1" stroke-linejoin="round"/></g></svg>
<div class="mt" style="top:317px">Снять фильтр</div>
<div class="sep" style="top:348px"></div>
<div class="mt" style="top:351px">Сортировать по возрастанию</div>
<svg class="a" style="left:16px;top:357px;overflow:visible" width="18" height="20"><g transform="translate(0,3)"><path d="M3.2 0.5 V6.5" stroke="#1568b3" stroke-width="2"/><path d="M0.2 5.8 H6.2 L3.2 9.5 Z" fill="#1568b3"/><g fill="#333"><rect x="8" y="0" width="2" height="0.9" fill="#888"/><rect x="8" y="3" width="5" height="0.9"/><rect x="8" y="6" width="6.5" height="0.9"/><rect x="8" y="9" width="8" height="1.1"/></g></g></svg>
<div class="a" style="left:1px;top:381px;width:320px;height:29px;background:#f9cb20"></div>
<div class="mt" style="top:381px">Сортировать по убыванию</div>
<svg class="a" style="left:16px;top:387.5px;overflow:visible" width="18" height="20"><g transform="translate(0,3)"><path d="M3.2 0.5 V6.5" stroke="#1568b3" stroke-width="2"/><path d="M0.2 5.8 H6.2 L3.2 9.5 Z" fill="#1568b3"/><g fill="#333"><rect x="8" y="0" width="8" height="1.1"/><rect x="8" y="3" width="6" height="0.9"/><rect x="8" y="6" width="4" height="0.9"/><rect x="8" y="9" width="2" height="0.9" fill="#666"/></g></g></svg>
<div class="sep" style="top:412px"></div>
<div class="mt" style="top:415px">Оформить</div>
<svg class="a" style="left:16px;top:417.5px;overflow:visible" width="18" height="20"><g transform="translate(0,3)"><rect x="0.6" y="3.2" width="14.6" height="11.6" fill="#fff" stroke="#7c8a96" stroke-width="1.1"/><path d="M0.6 5.5 H15.2 M5 3.2 V14.8 M10 3.2 V14.8" stroke="#9aa6b0" stroke-width="0.8"/><path d="M15.5 0.2 L6.5 9.5" stroke="#5a3a22" stroke-width="2"/><path d="M6.6 8.7 Q3.5 9 2.8 12 Q2.5 14 0.5 14.5 Q4.8 15.5 6.5 13 Q7.6 11.2 7 9.2 Z" fill="#e0242a"/></g></svg>
<div class="sub" style="top:425px"></div>
<div class="sep" style="top:446px"></div>
<div class="mt" style="top:449px">Уровни группировок</div>
<div class="sub" style="top:459px"></div>
<div class="sep" style="top:480px"></div>
<div class="mt" style="top:483px">Редактирование</div>
<div class="sub" style="top:493px"></div>
</div>
</body></html>
